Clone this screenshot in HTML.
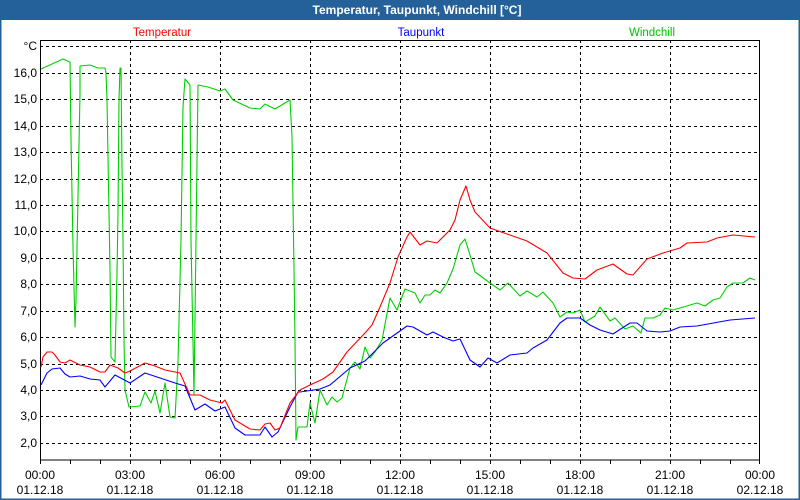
<!DOCTYPE html>
<html><head><meta charset="utf-8"><style>
html,body{margin:0;padding:0;background:#fff}
body{width:800px;height:500px;overflow:hidden;font-family:"Liberation Sans","DejaVu Sans",sans-serif}
</style></head><body>
<svg width="800" height="500" viewBox="0 0 800 500" xmlns="http://www.w3.org/2000/svg" style="display:block" font-family="Liberation Sans, DejaVu Sans, sans-serif">
<rect x="0" y="0" width="800" height="500" fill="#fff"/>
<rect x="0.5" y="0.5" width="799" height="499" fill="none" stroke="#24609a" stroke-width="2"/>
<rect x="0" y="0" width="800" height="20" fill="#24609a"/>
<text x="417" y="14" text-anchor="middle" font-size="12" font-weight="bold" fill="#fff">Temperatur, Taupunkt, Windchill [°C]</text>
<g font-size="11.5">
<text x="162" y="36" text-anchor="middle" fill="#ff0000">Temperatur</text>
<text x="421" y="36" text-anchor="middle" fill="#0000ff">Taupunkt</text>
<text x="652" y="36" text-anchor="middle" fill="#00c000">Windchill</text>
</g>
<g stroke="#000" stroke-width="1" stroke-dasharray="3,3" shape-rendering="crispEdges">
<line x1="40" y1="46.5" x2="760" y2="46.5"/>
<line x1="40" y1="73.5" x2="760" y2="73.5"/>
<line x1="40" y1="99.5" x2="760" y2="99.5"/>
<line x1="40" y1="126.5" x2="760" y2="126.5"/>
<line x1="40" y1="152.5" x2="760" y2="152.5"/>
<line x1="40" y1="179.5" x2="760" y2="179.5"/>
<line x1="40" y1="205.5" x2="760" y2="205.5"/>
<line x1="40" y1="231.5" x2="760" y2="231.5"/>
<line x1="40" y1="258.5" x2="760" y2="258.5"/>
<line x1="40" y1="284.5" x2="760" y2="284.5"/>
<line x1="40" y1="311.5" x2="760" y2="311.5"/>
<line x1="40" y1="337.5" x2="760" y2="337.5"/>
<line x1="40" y1="364.5" x2="760" y2="364.5"/>
<line x1="40" y1="390.5" x2="760" y2="390.5"/>
<line x1="40" y1="416.5" x2="760" y2="416.5"/>
<line x1="40" y1="443.5" x2="760" y2="443.5"/>
<line x1="130.5" y1="40" x2="130.5" y2="460"/>
<line x1="220.5" y1="40" x2="220.5" y2="460"/>
<line x1="310.5" y1="40" x2="310.5" y2="460"/>
<line x1="400.5" y1="40" x2="400.5" y2="460"/>
<line x1="490.5" y1="40" x2="490.5" y2="460"/>
<line x1="580.5" y1="40" x2="580.5" y2="460"/>
<line x1="670.5" y1="40" x2="670.5" y2="460"/>
</g>
<g stroke="#000" stroke-width="1" shape-rendering="crispEdges" fill="none">
<rect x="40.5" y="40.5" width="719" height="419.5"/>
<path d="M40.5 460v4M70.5 460v4M100.5 460v4M130.5 460v4M160.5 460v4M190.5 460v4M220.5 460v4M250.5 460v4M280.5 460v4M310.5 460v4M340.5 460v4M370.5 460v4M400.5 460v4M430.5 460v4M460.5 460v4M490.5 460v4M520.5 460v4M550.5 460v4M580.5 460v4M610.5 460v4M640.5 460v4M670.5 460v4M700.5 460v4M730.5 460v4M759.5 460v4"/>
</g>
<g font-size="12" fill="#000" text-anchor="end">
<text x="37" y="50">°C</text>
<text x="37" y="77">16,0</text><text x="37" y="103">15,0</text><text x="37" y="130">14,0</text>
<text x="37" y="156">13,0</text><text x="37" y="183">12,0</text><text x="37" y="209">11,0</text>
<text x="37" y="235">10,0</text><text x="37" y="262">9,0</text><text x="37" y="288">8,0</text>
<text x="37" y="315">7,0</text><text x="37" y="341">6,0</text><text x="37" y="368">5,0</text>
<text x="37" y="394">4,0</text><text x="37" y="420">3,0</text><text x="37" y="447">2,0</text>
</g>
<g font-size="12" fill="#000" text-anchor="middle">
<text x="40" y="479">00:00</text><text x="40" y="494">01.12.18</text>
<text x="130" y="479">03:00</text><text x="130" y="494">01.12.18</text>
<text x="220" y="479">06:00</text><text x="220" y="494">01.12.18</text>
<text x="310" y="479">09:00</text><text x="310" y="494">01.12.18</text>
<text x="400" y="479">12:00</text><text x="400" y="494">01.12.18</text>
<text x="490" y="479">15:00</text><text x="490" y="494">01.12.18</text>
<text x="580" y="479">18:00</text><text x="580" y="494">01.12.18</text>
<text x="670" y="479">21:00</text><text x="670" y="494">01.12.18</text>
<text x="760" y="479">00:00</text><text x="760" y="494">02.12.18</text>
</g>
<g fill="none" stroke-width="1.1" stroke-linejoin="round">
<polyline stroke="#00d000" points="41,69 63,59 70,62 71,140 73,247 75,327 76,300 78,197 80,93 80,66 90,65 98,68 105,68 106,73 107,100 109,213 110,270 111,357 115,362 117,273 118,213 119,100 120,68 121,68 122,167 123,240 124,340 125,390 129,407 140,406 145,392 151,403 155,391 160,413 165,383 170,417 175,418 178,363 181,240 183,107 185,79 190,85 191,240 194,395 196,240 198,85 208,87 220,91 225,89 233,100 250,108 260,109 265,104 275,109 290,100 292,137 293,203 294,270 295,340 296,440 298,427 307,427 310,403 315,423 320,390 327,405 332,397 337,402 342,398 350,368 355,362 360,369 365,347 370,358 375,352 382,340 390,298 397,310 405,289 415,293 420,303 425,295 430,295 435,290 440,293 447,283 453,269 460,245 465,239 470,255 475,272 482,277 490,283 500,290 508,283 520,296 527,291 537,297 543,292 553,303 560,317 567,312 573,313 580,310 585,322 595,316 600,307 610,321 615,318 625,329 633,326 641,333 645,318 653,318 660,315 665,308 673,310 697,303 705,306 713,300 720,298 727,287 733,283 743,283 750,278 755,280"/>
<polyline stroke="#0000ff" points="41,385 47,373 52,369 60,368 65,374 70,377 80,376 90,379 100,380 105,387 115,375 130,383 145,373 160,378 175,383 185,386 195,410 205,404 215,411 225,407 235,428 245,435 260,435 265,427 272,437 278,432 290,407 298,392 300,392 320,389 330,385 350,368 365,361 383,343 407,326 413,327 427,335 433,332 443,337 453,341 460,339 470,360 480,367 488,358 497,363 510,355 527,353 533,348 547,340 560,323 567,318 580,318 590,325 600,330 613,334 630,323 637,323 647,331 660,332 670,331 680,327 697,326 730,320 755,318"/>
<polyline stroke="#ff0000" points="41,367 43,357 47,352 52,352 55,355 60,362 65,363 70,360 80,365 90,367 100,372 105,372 110,365 118,368 125,373 130,371 145,363 155,366 165,370 175,372 180,373 190,395 200,395 210,400 222,403 225,400 235,420 250,429 260,430 265,424 270,423 275,430 280,428 290,403 300,390 310,385 323,379 333,372 347,352 365,333 372,325 380,307 390,283 398,257 407,237 410,232 420,245 427,241 437,243 450,230 455,220 460,200 466,186 470,200 475,212 490,228 507,234 527,241 547,253 563,273 573,278 585,279 597,270 613,264 627,274 633,275 647,259 663,253 680,248 687,243 707,242 717,238 733,235 755,237"/>
</g>
</svg>
</body></html>
